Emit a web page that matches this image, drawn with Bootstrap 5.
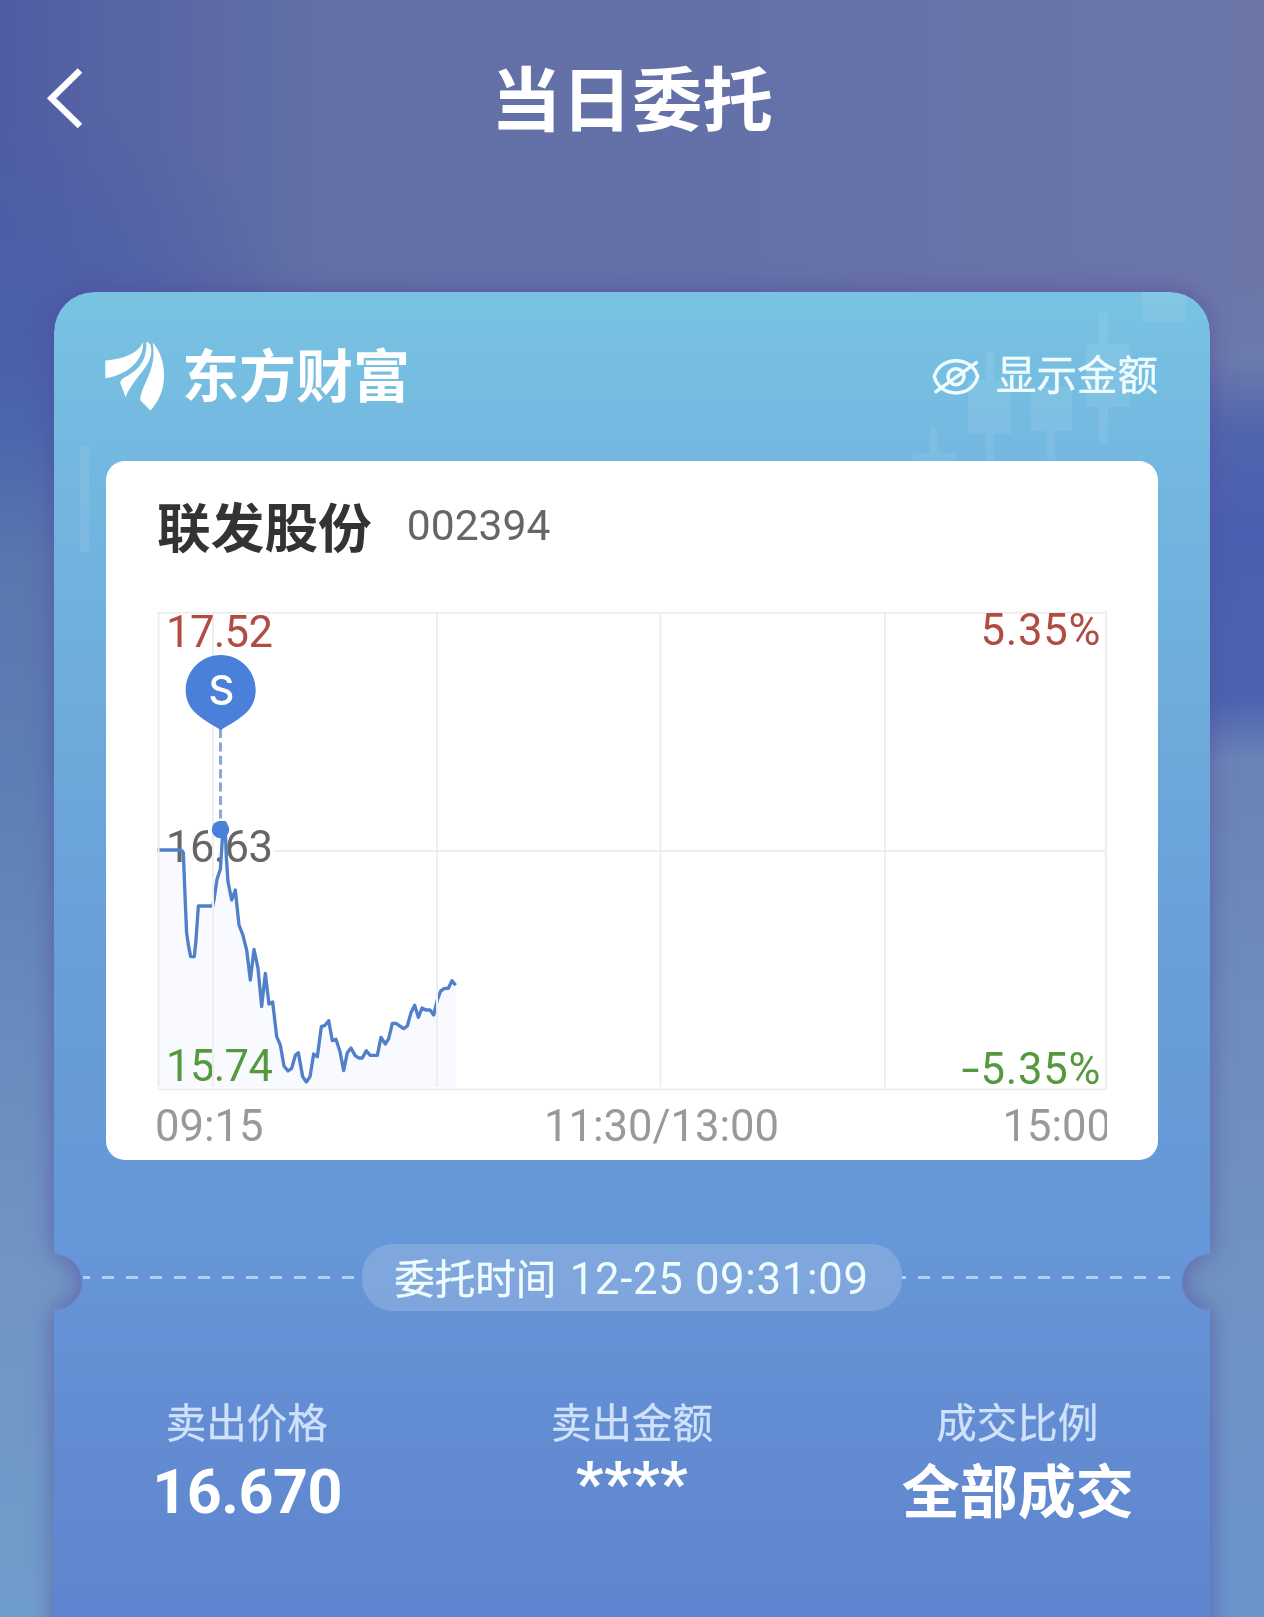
<!DOCTYPE html>
<html lang="zh-CN">
<head>
<meta charset="utf-8">
<meta name="viewport" content="width=device-width, initial-scale=1">
<title>当日委托</title>
<link href="https://cdn.jsdelivr.net/npm/bootstrap@5.3.0/dist/css/bootstrap.min.css" rel="stylesheet">
<style>
  body {
    width: 1264px; height: 1617px; overflow: hidden; margin: 0;
    font-family: Roboto, "Noto Sans CJK SC", sans-serif;
    background:
      linear-gradient(180deg, #4b5faa00 290px, #4b5faa 350px, #4b66ae 430px, #5a76ae 560px, #5d7eb4 770px, #6a8bbd 1040px, #7195c5 1280px, #6f9dcb 1617px) left top / 100px 100% no-repeat,
      linear-gradient(180deg, #6b7aac00 290px, #6b7aac 360px, #5165ae 430px, #4a60b0 530px, #4c64b0 700px, #6a83b6 760px, #6e8cbd 1000px, #7093c3 1280px, #6a95cd 1617px) right top / 100px 100% no-repeat,
      radial-gradient(ellipse 300px 230px at 0 330px, #4b5faa, #4b5faa00) 0 0 / 100% 600px no-repeat,
      linear-gradient(90deg, #4e5ca4 0, #5562a4 7%, #6270a6 26%, #6471a8 60%, #6c77a8 100%);
  }
  .cjk { font-family: "Noto Sans CJK SC", sans-serif; }
  .topbar { height: 196px; margin-bottom: 96px; padding: 0 46px; }
  .page-title { font-size: 70.5px; line-height: 1; font-weight: 700; padding-bottom: 6px; }
  .side-slot { width: 120px; }
  .ticket-shadow { margin: 0 54px; filter: drop-shadow(0 0 12px rgba(84, 70, 155, .65)); }
  .ticket {
    height: 1400px; border-radius: 40px 40px 0 0; padding-top: 1px;
    background: linear-gradient(180deg, #78c3e2 0, #74b9e1 150px, #6eacdb 410px, #6aa1da 610px, #679ad7 810px, #6697d8 950px, #6593d6 1010px, #628bd1 1160px, #5e86d0 1325px);
    -webkit-mask: radial-gradient(circle 29px at 50% 990px, transparent 27px, #000 28.5px) 578px 0 / 100% 100% repeat-x;
    mask: radial-gradient(circle 29px at 50% 990px, transparent 27px, #000 28.5px) 578px 0 / 100% 100% repeat-x;
  }
  .candles { left: 0; top: 0; fill: #fff; fill-opacity: .08; }
  .brand-bar { height: 168px; padding: 0 52px 0 49px; }
  .brand-name { font-size: 57px; line-height: 1; font-weight: 700; margin-left: 15px; padding-bottom: 9px; }
  .toggle-label { font-size: 40.5px; line-height: 1; margin-left: 16px; padding-bottom: 8px; -webkit-text-stroke: .4px; }
  .pale { color: #effdff; }
  .quote { margin: 0 52px; height: 699px; border-radius: 19px; background: #fff; }
  .quote-head { height: 139px; padding: 0 51px 11px; }
  .stock-name { font-size: 53.7px; line-height: 1; font-weight: 700; color: #333; }
  .stock-code { font-size: 42.6px; line-height: 1; color: #666; margin-left: 35px; }
  .chart-svg { margin-left: 50px; font-family: Roboto, sans-serif; font-size: 43.6px; }
  .time-axis { margin: 0 51px 0 49px; height: 64px; font-size: 43.6px; line-height: 62px; color: #999; }
  .time-mid { margin-left: 57px; }
  .time-end { margin-right: -4px; }
  .tear-row { margin: 84px 28px 0 29px; height: 67px; }
  .dash-line { height: 3px; background: repeating-linear-gradient(90deg, #afcdf6 0 12px, transparent 12px 24px); }
  .dash-left { background-position-x: -5px; background-size: 600px 3px; }
  .dash-right { background-position-x: -8px; background-size: 600px 3px; margin-right: 2px; }
  .time-pill { width: 540px; height: 67px; border-radius: 31px; background: rgba(255, 255, 255, .17); font-size: 43.6px; line-height: 1; letter-spacing: .7px; white-space: pre; }
  .time-pill .digits { padding-top: 5px; margin-left: 2px; }
  .time-pill .cjk { font-size: 40.5px; letter-spacing: 0; -webkit-text-stroke: .4px; }
  .stats { margin-top: 85px; }
  .stat-label { font-size: 40.5px; line-height: 50px; color: #cfe1fb; -webkit-text-stroke: .3px; }
  .stat-value { font-size: 61px; line-height: 92px; font-weight: 700; letter-spacing: -.5px; padding-left: 1px; }
  .stat-value.masked { line-height: 77px; letter-spacing: .4px; padding-left: 0; }
  .stat-value.cjk { font-size: 58px; line-height: 85px; letter-spacing: 0; }
</style>
</head>
<body>
<header class="topbar d-flex align-items-center justify-content-between text-white">
  <div class="side-slot">
    <svg class="d-block" width="40" height="62" viewBox="46 66.500 40 62"><path d="M80 70 51.500 97.800 80 125.500" fill="none" stroke="#fff" stroke-width="6.500"/></svg>
  </div>
  <h1 class="page-title cjk m-0">当日委托</h1>
  <div class="side-slot"></div>
</header>

<main class="ticket-shadow">
  <div class="ticket position-relative text-white">
    <svg class="candles position-absolute" width="1156" height="300" viewBox="54 292 1156 300">
      <rect x="1142" y="292" width="44" height="29"/>
      <path d="M1099 313h9v31h22v63h-22v36h-9v-36h-13v-63h13z"/>
      <path d="M986 351h8v29h17v54h-17v30h-8v-30h-18v-54h18z"/>
      <path d="M1031 387h41v44h-17v33h-8v-33h-16z"/>
      <path d="M930 427h7v26h19v12h-43v-12h17z"/>
      <rect x="80" y="446" width="9" height="106" rx="2"/>
    </svg>

    <div class="brand-bar position-relative d-flex align-items-center justify-content-between">
      <div class="d-flex align-items-center">
        <svg width="64" height="71" viewBox="38 66 192 207" preserveAspectRatio="none" fill="#fff">
          <path d="M45 120C95 116 145 100 158 66C162 110 122 160 45 172Z"/>
          <path d="M168 66Q176 66 180 74C198 130 130 165 106 227L90 186Q90 174 105 168C145 148 170 120 168 66Z"/>
          <path d="M187 68C215 95 228 150 218 195C212 225 195 250 180 266L150 236C148 195 202 150 187 68Z"/>
        </svg>
        <span class="brand-name cjk">东方财富</span>
      </div>
      <div class="d-flex align-items-center pale">
        <svg width="48" height="38" viewBox="96 236 144 114" fill="none" stroke="#effdff" stroke-width="10.500" stroke-linecap="round">
          <path d="M103 292C120 228 216 228 233 292C216 357 120 357 103 292Z"/>
          <circle cx="168" cy="292" r="24"/>
          <path d="M108 337 229 250"/>
        </svg>
        <span class="toggle-label cjk">显示金额</span>
      </div>
    </div>

    <section class="quote position-relative overflow-hidden">
      <div class="quote-head d-flex align-items-center">
        <span class="stock-name cjk">联发股份</span>
        <span class="stock-code">002394</span>
      </div>
      <svg class="chart-svg d-block" width="956" height="496" viewBox="156 600 956 496">
        <g transform="translate(140 800) scale(.33333)">
          <path fill="#f8faff" d="M52 150H118L130 158 140 400 152 470H163L175 318H218L231 238 241 208 252 64 264 245 275 300 286 270 297 375 320 450 331 540 342 448 354 505 365 620 376 520 387 612 398 606 410 710 421 735 432 798 444 813 466 766 475 758 488 830 499 846 510 830 521 762 544 680 566 662 577 722 588 718 611 812 622 758 633 744 656 774 679 752 712 766 723 712 736 732 757 670 791 686 824 616 835 652 846 624 881 645 902 573 936 542 947 556V862H52Z"/>
        </g>
        <text x="166" y="862" fill="#666" textLength="107">16.63</text>
        <text x="166" y="1081" fill="#55993f" textLength="107">15.74</text>
        <g transform="translate(140 800) scale(.33333)">
          <path fill="none" stroke="#4f80c9" stroke-width="10" stroke-linejoin="round" d="M52 150H118Q126 150 130 158L136 310 140 400 146 440 152 470H163L168 420 175 318H218L222 300 231 238 241 208 245 150 250 68H255L259 170 264 245 275 300 286 270 297 375 308 403 320 450 331 540 342 448 354 505 365 620 376 520 387 612 398 606 410 710 421 735 432 798 444 813 455 805 466 766 475 758 488 830 499 846 510 830 521 762 532 770 544 680 555 676 566 662 577 722 588 718 600 755 611 812 622 758 633 744 645 766 656 774H667L679 752 690 766H712L723 712 736 732 746 716 757 670H768L791 686 802 678 813 638 824 616 835 652 846 624 858 630H870L881 645 892 600 902 573 914 565H925L936 542 947 556"/>
        </g>
        <path d="M157 612.700H1106.500M274 851H1106.500M157 1089.500H1106.500M158.500 612V1087M213 612V1087M437 612V1087M660.500 612V1087M885 612V1087M1106 611V1090" fill="none" stroke="#eeeef0" stroke-width="2"/>
        <text x="166" y="647" fill="#b14c43" textLength="107">17.52</text>
        <text x="980.500" y="645" fill="#b14c43" textLength="120">5.35%</text>
        <text x="980.500" y="1084" fill="#55993f" textLength="120">5.35%</text>
        <text x="961.500" y="1084" fill="#55993f" textLength="18" lengthAdjust="spacingAndGlyphs">-</text>
        <path d="M220.500 729V822" stroke="#86a8dc" stroke-width="3" stroke-dasharray="9 4.400"/>
        <circle cx="220.500" cy="829.500" r="8.700" fill="#4a80d9"/>
        <path fill="#4a80d9" d="M220.700 655C240 655 255.700 670.700 255.700 690C255.700 699 252.500 706.500 247 712C240 719 229 725 220.700 730C212.500 725 201.500 719 194.500 712C189 706.500 185.700 699 185.700 690C185.700 670.700 201.500 655 220.700 655Z"/>
        <text x="221.500" y="704" fill="#fff" font-family="Inter, sans-serif" font-size="40" font-weight="500" text-anchor="middle">S</text>
      </svg>
      <div class="time-axis d-flex justify-content-between overflow-hidden">
        <span>09:15</span><span class="time-mid">11:30/13:00</span><span class="time-end">15:00</span>
      </div>
    </section>

    <div class="tear-row d-flex align-items-center">
      <div class="dash-line dash-left flex-fill"></div>
      <div class="time-pill d-flex align-items-center justify-content-center flex-shrink-0 pale"><span class="cjk">委托时间</span><span class="digits"> 12-25 09:31:09</span></div>
      <div class="dash-line dash-right flex-fill"></div>
    </div>

    <div class="stats row g-0 text-center">
      <div class="col">
        <div class="stat-label cjk">卖出价格</div>
        <div class="stat-value">16.670</div>
      </div>
      <div class="col">
        <div class="stat-label cjk">卖出金额</div>
        <div class="stat-value masked">****</div>
      </div>
      <div class="col">
        <div class="stat-label cjk">成交比例</div>
        <div class="stat-value cjk">全部成交</div>
      </div>
    </div>
  </div>
</main>
<script src="https://cdn.jsdelivr.net/npm/bootstrap@5.3.0/dist/js/bootstrap.bundle.min.js"></script>
</body>
</html>
